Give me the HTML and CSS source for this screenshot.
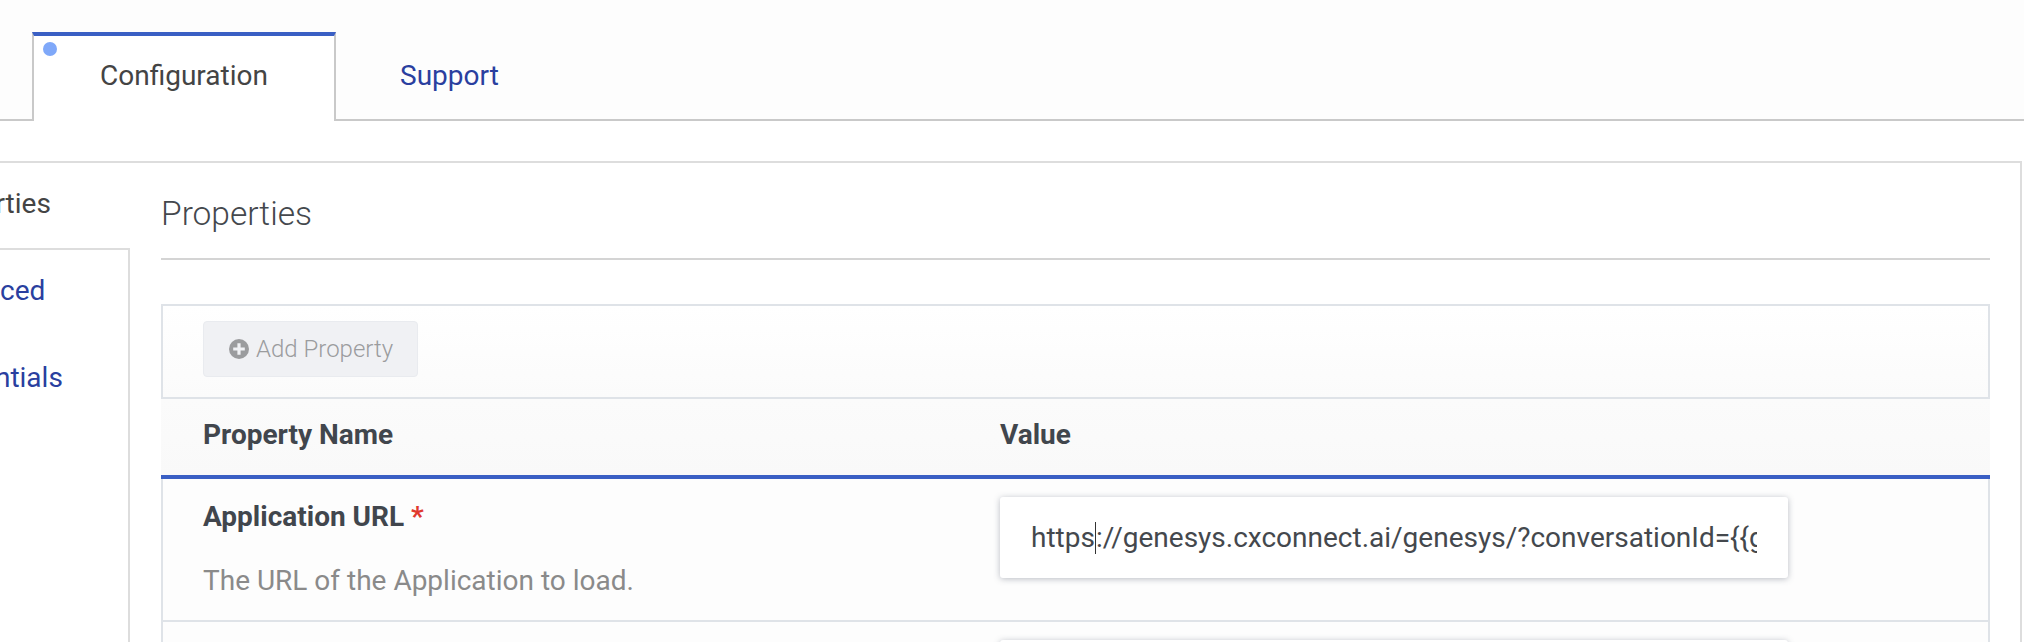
FILE: index.html
```html
<!DOCTYPE html>
<html lang="en">
<head>
  <meta charset="UTF-8" />
  <title>Configuration</title>
  <link rel="stylesheet" href="styles.css">
</head>
<body>
  <div class="page">
    <!-- Tabs -->
    <nav class="tabs">
      <a class="tab tab-active"><span class="tab-dot"></span>Configuration</a>
      <a class="tab">Support</a>
    </nav>

    <div class="content">
      <!-- Side menu -->
      <aside class="side">
        <div class="side-current">Properties</div>
        <ul class="side-list">
          <li>Advanced</li>
          <li>Credentials</li>
        </ul>
      </aside>

      <!-- Properties panel -->
      <section class="panel">
        <h2 class="panel-title">Properties</h2>
        <div class="prop-table">
          <div class="toolbar">
            <button class="add-btn" disabled>
              <svg class="add-icon" viewBox="0 0 20 20" width="20" height="20">
                <circle cx="10" cy="10" r="10" fill="#9b9c9e"/>
                <path d="M8.4 4.2h3.2v4.2h4.2v3.2h-4.2v4.2H8.4v-4.2H4.2V8.4h4.2z" fill="#f0f1f4"/>
              </svg>
              Add Property
            </button>
          </div>
          <div class="prop-row prop-head">
            <div class="col-name">Property Name</div>
            <div class="col-value">Value</div>
          </div>
          <div class="prop-row">
            <div class="col-name">
              <div class="prop-label">Application URL <span class="required">*</span></div>
              <div class="prop-desc">The URL of the Application to load.</div>
            </div>
            <div class="col-value">
              <div class="text-field">
                <div class="text-value">https<span class="caret"></span>://genesys.cxconnect.ai/genesys/?conversationId={{gcConversationId}}</div>
              </div>
            </div>
          </div>
          <div class="prop-row">
            <div class="col-name"></div>
            <div class="col-value">
              <div class="text-field"></div>
            </div>
          </div>
        </div>
      </section>
    </div>
  </div>
</body>
</html>
```

FILE: styles.css
```css
html, body {
  margin: 0;
  padding: 0;
  height: 642px;
  overflow: hidden;
  background-color: #fff;
}

body {
  font-family: 'Roboto', 'Liberation Sans', sans-serif;
  font-size: 28px;
  color: #444;
}

.page {
  margin-left: -78px;
  width: 2102px;
}

/* Tabs */
.tabs {
  display: flex;
  box-sizing: border-box;
  height: 121px;
  padding: 32px 0 0 110px;
  background-color: #fdfdfd;
  border-bottom: 2px solid #c9c9c9;
}

.tab {
  position: relative;
  padding: 0 64px;
  line-height: 80px;
  color: #2a3f9f;
  border-top: 4px solid transparent;
}

.tab-active {
  box-sizing: border-box;
  width: 304px;
  height: 89px;
  padding: 0 0 0 66px;
  color: #444;
  background-color: #fff;
  border-top: 4px solid #3a5fc4;
  border-left: 2px solid #c9c9c9;
  border-right: 2px solid #c9c9c9;
}

.tab-dot {
  position: absolute;
  top: 6px;
  left: 9px;
  width: 14px;
  height: 14px;
  border-radius: 50%;
  background-color: #7fa8f9;
}

/* Layout below the tabs */
.content {
  display: flex;
  margin-top: 40px;
  height: 481px;
}

.side {
  flex: 0 0 208px;
  display: flex;
  flex-direction: column;
  border-top: 2px solid #ddd;
}

.side-current {
  box-sizing: border-box;
  height: 85px;
  padding-top: 22px;
  line-height: 38px;
}

.side-list {
  flex: 1;
  margin: 0;
  padding: 0;
  list-style: none;
  color: #2a3f9f;
  border-top: 2px solid #ddd;
  border-right: 2px solid #ddd;
}

.side-list li {
  height: 87px;
  line-height: 38px;
  padding-top: 22px;
  margin-bottom: -22px;
}

.panel {
  box-sizing: border-box;
  width: 1892px;
  padding: 0 30px 0 31px;
  border-top: 2px solid #ddd;
  border-right: 2px solid #ddd;
}

.panel-title {
  margin: 0 0 44px;
  padding: 27px 0 9px;
  height: 59px;
  font-size: 33.5px;
  font-weight: 300;
  line-height: 48px;
  color: #44484d;
  border-bottom: 2px solid #d4d4d4;
  box-sizing: content-box;
}

/* Table */
.prop-table {
  border: 2px solid #dfe3e8;
  border-bottom: none;
}

.toolbar {
  box-sizing: border-box;
  height: 93px;
  padding: 15px 40px;
  background: linear-gradient(#fff, #fbfbfb);
  border-bottom: 2px solid #dfe3e8;
}

.add-btn {
  display: flex;
  align-items: center;
  gap: 7px;
  box-sizing: border-box;
  width: 215px;
  height: 56px;
  padding: 0 0 0 25px;
  font-family: inherit;
  font-size: 24px;
  font-weight: 300;
  color: #9b9c9e;
  background-color: #f0f1f4;
  border: 1px solid #e9ebef;
  border-radius: 4px;
}

.add-icon {
  flex: none;
}

.prop-row {
  display: flex;
  padding: 0 40px;
  background-color: #fdfdfd;
  border-bottom: 2px solid #dfe3e8;
}

.prop-head {
  box-sizing: content-box;
  height: 71px;
  align-items: center;
  margin: 0 -2px;
  padding: 0 42px 5px;
  font-weight: 700;
  color: #41464d;
  background: linear-gradient(#fbfbfb, #f9f9f9);
  border-bottom: 4px solid #3a5fc4;
}

.col-name {
  flex: 0 0 797px;
}

.col-value {
  flex: 0 0 788px;
  min-width: 0;
}

.prop-label {
  margin-top: 19px;
  line-height: 38px;
  font-weight: 700;
  color: #41464d;
}

.required {
  color: #e0392f;
}

.prop-desc {
  margin-top: 26px;
  line-height: 38px;
  color: #8a8a8a;
}

.text-field {
  box-sizing: border-box;
  height: 81px;
  margin: 18px 0 42px;
  padding: 0 31px;
  background-color: #fff;
  border-radius: 3px;
  box-shadow: 0 1px 6px rgba(60, 70, 90, 0.35);
}

.text-value {
  line-height: 81px;
  white-space: nowrap;
  overflow: hidden;
  color: #44484d;
}

.caret {
  display: inline-block;
  width: 0;
  height: 32px;
  vertical-align: -7px;
  border-left: 1px solid #333;
}
```
